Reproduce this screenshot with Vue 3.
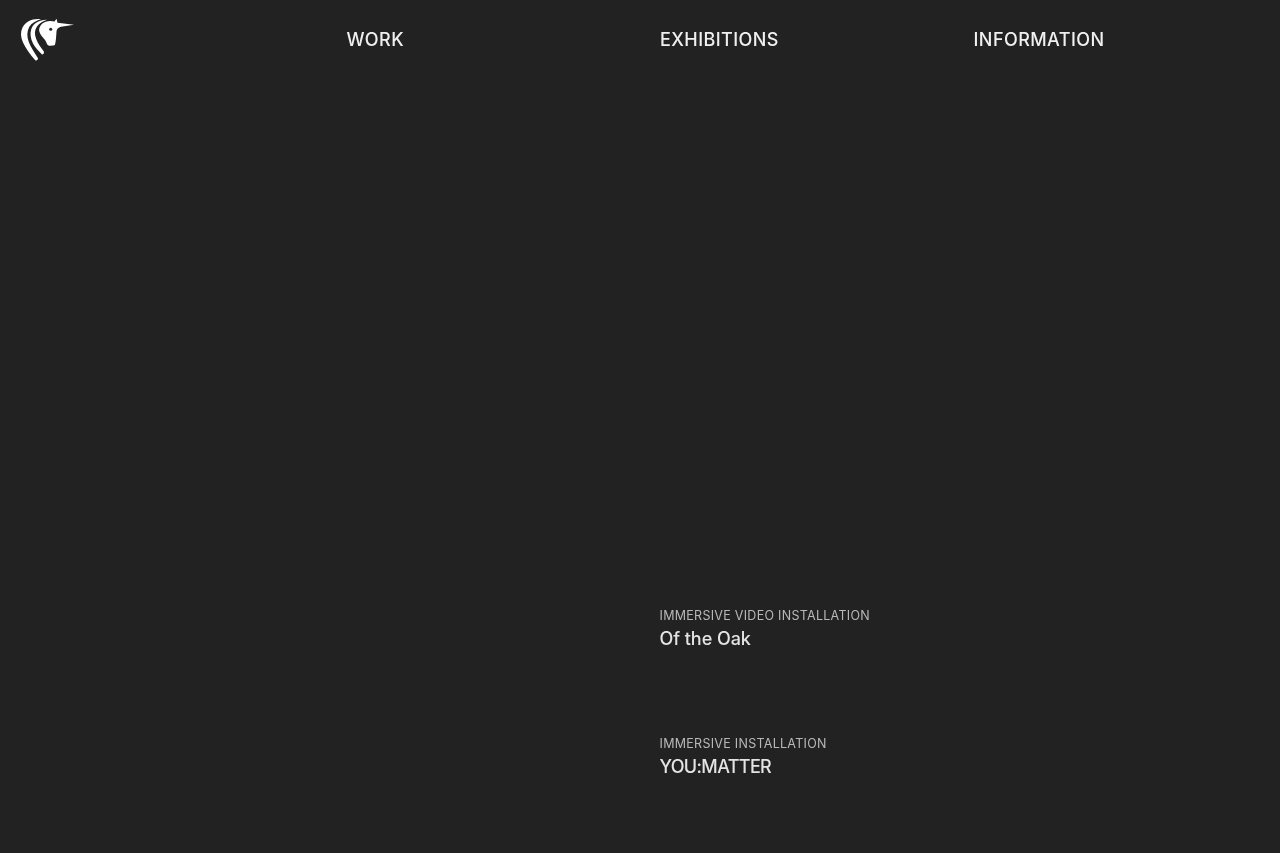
<script setup>
const nav = ['WORK', 'EXHIBITIONS', 'INFORMATION']
const items = [
  { kind: 'IMMERSIVE VIDEO INSTALLATION', title: 'Of the Oak', tight: false },
  { kind: 'IMMERSIVE INSTALLATION', title: 'YOU:MATTER', tight: true }
]
</script>

<template>
  <div class="page">
    <header class="head">
      <a class="logo" aria-label="Home">
        <svg width="56" height="44" viewBox="0 0 56 44">
          <path fill="#fff" d="M21 1.200C13 0 5.500 3.500 2.500 9.500C0.300 14 0.600 19 3 24.500C5.500 30 10 36.500 15.500 42.500C17 42.800 18 41.800 18 40.300C14.500 34.500 10.500 29 8.800 24C6.800 18.500 6.800 13.500 9.200 9C11.500 5 16 2.500 21 1.200Z"/>
          <path fill="#fff" d="M27 1.800C20 1.500 13.500 5 11.300 11C9.800 15.500 10.500 20.500 13 25.500C15.300 29.500 18.500 33 22 36.500C23.500 36.500 24 35.300 24 33.800C20.800 29.500 17.800 25.500 16.200 21C14.300 16 14.500 12 17 8.500C19.300 5.300 22.800 3.200 27 1.800Z"/>
          <path fill="#fff" d="M36.500 0.800L37.500 4.800L54 6.800L41 8.800C38 9.500 36.800 11 36.500 13.500C36.200 18 36 23 35 26.800C34 27.700 31 27.900 28.500 27.500C26.800 26.800 26.500 24 25 22C22.500 19 20 16.500 19.200 13C18.800 9 21.500 5.500 25.500 3.800C28.500 2.700 32 2.800 34.500 3.500Z"/>
          <circle cx="30.700" cy="11.300" r="1.500" fill="#222"/>
        </svg>
      </a>
      <nav class="nav">
        <a v-for="n in nav" :key="n" class="nav-link">{{ n }}</a>
      </nav>
    </header>
    <main class="list">
      <div v-for="it in items" :key="it.title" class="item">
        <div class="kind">{{ it.kind }}</div>
        <div class="title" :class="{ tight: it.tight }">{{ it.title }}</div>
      </div>
    </main>
  </div>
</template>

<style scoped>
.page {
  height: 853px;
  overflow: hidden;
  background: #222;
  font-family: Inter, "Liberation Sans", sans-serif;
}
.head {
  display: flex;
  height: 80px;
}
.logo {
  display: block;
  width: 346.500px;
  padding: 18px 0 0 20px;
  box-sizing: border-box;
  flex: none;
}
.nav {
  display: grid;
  grid-template-columns: repeat(3, 313.5px);
  will-change: opacity;
}
.nav-link {
  color: #f0f0f0;
  font-size: 18px;
  font-weight: 450;
  line-height: 22px;
  padding-top: 29px;
  letter-spacing: 0.43px;
}
.list {
  margin: 528px 0 0 659.500px;
  display: flex;
  flex-direction: column;
  gap: 88px;
  will-change: opacity;
}
.kind {
  color: #b8b8b8;
  font-size: 12.500px;
  line-height: 16px;
  letter-spacing: 0.28px;
}
.title {
  color: #e4e4e4;
  font-size: 18px;
  font-weight: 450;
  line-height: 24px;
  margin-top: 3px;
  margin-bottom: -3px;
  letter-spacing: -0.05px;
}
.tight {
  letter-spacing: -0.65px;
}
</style>
